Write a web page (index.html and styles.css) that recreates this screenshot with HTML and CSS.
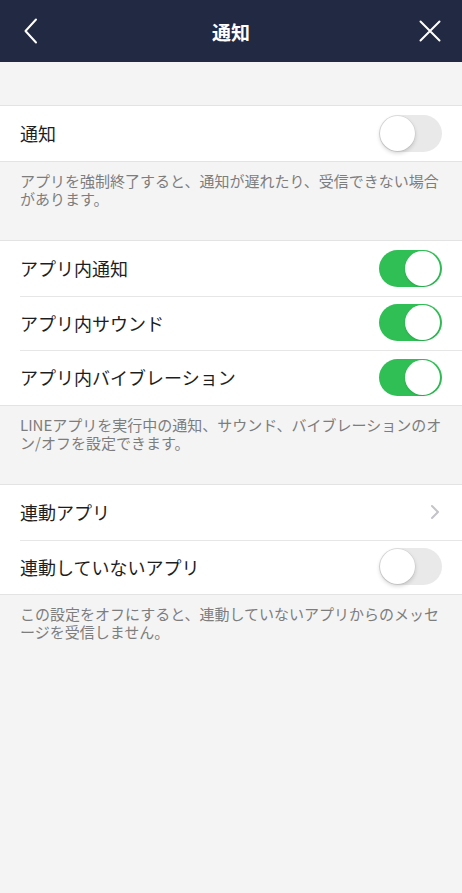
FILE: index.html
```html
<!DOCTYPE html>
<html lang="ja">
<head>
<meta charset="utf-8">
<title>通知</title>
<link rel="stylesheet" href="styles.css">
</head>
<body>
<div class="screen">
  <header class="navbar">
    <button class="nav-btn" aria-label="戻る">
      <svg width="16" height="26" viewBox="0 0 16 26"><path d="M13 1.5 L2.5 13 L13 24.5" fill="none" stroke="#fff" stroke-width="2" stroke-linecap="round" stroke-linejoin="round"/></svg>
    </button>
    <h1 class="title">通知</h1>
    <button class="nav-btn" aria-label="閉じる">
      <svg width="22" height="22" viewBox="0 0 22 22"><path d="M1.5 1.5 L20.5 20.5 M20.5 1.5 L1.5 20.5" fill="none" stroke="#fff" stroke-width="2" stroke-linecap="round"/></svg>
    </button>
  </header>

  <main class="content">
    <section class="group first">
      <div class="row"><span class="label">通知</span><span class="toggle"></span></div>
    </section>
    <p class="note">アプリを強制終了すると、通知が遅れたり、受信できない場合があります。</p>

    <section class="group">
      <div class="row"><span class="label">アプリ内通知</span><span class="toggle on"></span></div>
      <div class="row"><span class="label">アプリ内サウンド</span><span class="toggle on"></span></div>
      <div class="row"><span class="label">アプリ内バイブレーション</span><span class="toggle on"></span></div>
    </section>
    <p class="note">LINEアプリを実行中の通知、サウンド、バイブレーションのオン/オフを設定できます。</p>

    <section class="group">
      <div class="row"><span class="label">連動アプリ</span>
        <svg class="chev" width="10" height="16" viewBox="0 0 10 16"><path d="M2 2 L8 8 L2 14" fill="none" stroke="#c4c4c8" stroke-width="2" stroke-linecap="round" stroke-linejoin="round"/></svg>
      </div>
      <div class="row"><span class="label">連動していないアプリ</span><span class="toggle"></span></div>
    </section>
    <p class="note">この設定をオフにすると、連動していないアプリからのメッセージを受信しません。</p>
  </main>
</div>
</body>
</html>
```

FILE: styles.css
```css
* { box-sizing: border-box; }
html, body {
  margin: 0;
  padding: 0;
  height: 100%;
  background: #f4f4f4;
  font-family: "Noto Sans CJK JP", "Noto Sans", sans-serif;
}
.screen {
  width: 462px;
  min-height: 893px;
  background: #f4f4f4;
  display: flex;
  flex-direction: column;
}
.navbar {
  height: 62px;
  background: #222942;
  display: flex;
  align-items: center;
  justify-content: space-between;
  padding: 0 17px 0 17px;
}
.nav-btn {
  background: none;
  border: 0;
  padding: 0;
  width: 30px;
  height: 30px;
  display: flex;
  align-items: center;
  justify-content: center;
}
.nav-btn:first-child { justify-content: flex-start; padding-left: 6px; }
.title {
  margin: 0;
  color: #fff;
  font-size: 19px;
  font-weight: 700;
  letter-spacing: 0;
}
.content {
  padding-top: 43px;
  display: flex;
  flex-direction: column;
}
.group {
  background: #fff;
  border-top: 1px solid #e3e3e3;
  border-bottom: 1px solid #e3e3e3;
}
.row {
  height: 54.5px;
  display: flex;
  align-items: center;
  justify-content: space-between;
  padding: 0 20px 0 20px;
  position: relative;
}
.row + .row::before {
  content: "";
  position: absolute;
  left: 20px;
  right: 0;
  top: 0;
  height: 1px;
  background: #e6e6e6;
}
.label {
  font-size: 18px;
  color: #1e1e1e;
}
.toggle {
  width: 63px;
  height: 37px;
  border-radius: 19px;
  background: #e9e9ea;
  position: relative;
  flex: none;
}
.toggle::after {
  content: "";
  position: absolute;
  top: 1px;
  left: 1px;
  width: 35px;
  height: 35px;
  border-radius: 50%;
  background: #fff;
  box-shadow: 0 2px 4px rgba(0,0,0,0.18), 0 0 0 0.5px rgba(0,0,0,0.08);
}
.toggle.on { background: #2fbf55; }
.toggle.on::after { left: 26px; box-shadow: 0 1px 2px rgba(0,0,0,0.12); }
.chev { margin-right: 2px; }
.note {
  margin: 0;
  padding: 10px 20px 0 20px;
  font-size: 15px;
  line-height: 18px;
  color: #7d7d7d;
  line-break: loose;
  height: 78.5px;
}
```
